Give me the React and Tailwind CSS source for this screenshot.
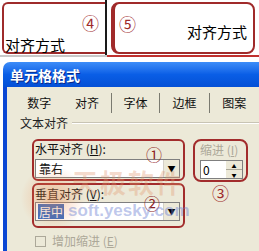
import React from "react";

const F = { fontFamily: '"Noto Sans CJK SC", "Noto Sans", sans-serif' };

function Tab({ label, w, sep }) {
  return (
    <div
      className={`h-[20px] flex items-center justify-center text-[12px] text-[#111] ${w} ${sep ? "border-r border-[#7a7a70]" : ""}`}
    >
      {label}
    </div>
  );
}

function Combo({ text, highlight }) {
  return (
    <div className="h-[19px] ml-[1px] mr-[3px] border border-[#7f7f7f] bg-white flex items-center">
      <div className="flex-1 flex items-center pl-[2px]">
        <span
          className={`text-[12px] leading-[15px] px-[1px] ${highlight ? "bg-[#316ac5] text-white" : "text-[#111]"}`}
        >
          {text}
        </span>
      </div>
      <div className="w-[16px] h-[17px] flex items-center justify-center bg-[#ece9d8] border-l border-[#d4d0c8] text-[8px] text-black">
        ▼
      </div>
    </div>
  );
}

export default function App() {
  return (
    <div className="w-[259px] h-[251px] overflow-hidden relative bg-white" style={F}>
      {/* spreadsheet cells */}
      <div className="flex h-[55px]">
        <div className="ml-[2px] mt-[2px] w-[103px] h-[52px] rounded-l-[6px] border-2 border-r-0 border-[#9e2b2b] flex flex-col pl-[1px]">
          <div className="flex justify-end pr-[6px] pt-[10px] h-[33px]">
            <span className="text-[17px] leading-[18px] text-[#9e2b2b]">④</span>
          </div>
          <span className="text-[15px] leading-[15px] text-black">对齐方式</span>
        </div>
        <div className="w-[2px] h-[57px] bg-[#1a1a1a]" />
        <div className="ml-[4px] mt-[2px] w-[144px] h-[52px] rounded-[8px] border-2 border-l-[4px] border-[#a02a2a] flex items-start justify-between pl-[4px] pr-[6px]">
          <span className="text-[17px] leading-[18px] text-[#9e2b2b] mt-[11px]">⑤</span>
          <span className="text-[15px] leading-[15px] text-black mt-[20px]">对齐方式</span>
        </div>
      </div>
      <div className="flex h-[2px]">
        <div className="w-[107px] bg-[#c8c8c8]" />
        <div className="flex-1 bg-[#c0302e]" />
      </div>
      <div className="h-[5px] bg-white" />

      {/* dialog */}
      <div className="ml-[3px] rounded-tl-[7px] overflow-hidden">
        <div className="h-[25px] bg-linear-to-b from-[#3d8df8] via-[#0a5ee6] to-[#0550d6] flex items-center pl-[7px]">
          <span className="text-white font-bold text-[14px] leading-[16px] [text-shadow:1px_1px_0_#0a2a8a]">
            单元格格式
          </span>
        </div>
        <div className="border-l-[4px] border-[#0b47d4] bg-[#ece9d8] h-[164px] pt-[6px]">
          {/* tabs */}
          <div className="flex pl-[8px] h-[20px]">
            <Tab label="数字" w="w-[53px]" />
            <Tab label="对齐" w="w-[53px]" sep />
            <Tab label="字体" w="w-[53px]" sep />
            <Tab label="边框" w="w-[54px]" sep />
            <Tab label="图案" w="w-[54px]" />
          </div>
          {/* group title */}
          <div className="flex items-center pl-[13px] mt-[2px] h-[15px]">
            <span className="text-[12px] leading-[14px] text-[#222]">文本对齐</span>
            <div className="flex-1 ml-[4px] h-[2px] border-t border-[#c8c4b4] border-b border-b-white" />
          </div>

          <div className="flex pl-[25px] mt-[9px] gap-[8px]">
            <div className="w-[153px] flex flex-col gap-[2px]">
              <div className="h-[42px] rounded-[6px] border-2 border-[#a22c2c] relative">
                <div className="text-[12px] leading-[15px] text-[#111] pl-[1px]">
                  水平对齐 (<span className="underline">H</span>):
                </div>
                <div className="mt-[3px]">
                  <Combo text="靠右" />
                </div>
                <span className="absolute left-[112px] top-[5px] text-[16px] leading-[16px] text-[#8e2222]">①</span>
              </div>
              <div className="h-[45px] rounded-[6px] border-2 border-[#a22c2c] relative">
                <div className="text-[12px] leading-[15px] text-[#111] pl-[1px] pt-[1px]">
                  垂直对齐 (<span className="underline">V</span>):
                </div>
                <div className="mt-[1px]">
                  <Combo text="居中" highlight />
                </div>
                <span className="absolute left-[110px] top-[10px] text-[16px] leading-[16px] text-[#8e2222]">②</span>
              </div>
            </div>
            <div className="flex flex-col items-center w-[55px]">
              <div className="w-[55px] h-[43px] rounded-[8px] border-2 border-[#a22c2c] pl-[5px] pt-[1px]">
                <div className="text-[12px] leading-[15px] text-[#aca899]">
                  缩进 (<span className="underline">I</span>)
                </div>
                <div className="mt-[3px] w-[43px] h-[19px] border border-[#7f7f7f] bg-white flex items-center">
                  <span className="flex-1 text-[12px] leading-[14px] pl-[2px] text-black">0</span>
                  <div className="w-[16px] h-[17px] flex flex-col bg-[#ece9d8]">
                    <div className="flex-1 flex items-center justify-center text-[5px] leading-[5px] border-b border-[#aca899]">▲</div>
                    <div className="flex-1 flex items-center justify-center text-[5px] leading-[5px]">▼</div>
                  </div>
                </div>
              </div>
              <span className="mt-[2px] text-[17px] leading-[18px] text-[#9e2b2b]">③</span>
            </div>
          </div>

          <div className="flex items-center pl-[28px] mt-[6px] gap-[6px]">
            <div className="w-[11px] h-[11px] border border-[#aca899] bg-[#ece9d8]" />
            <span className="text-[12px] leading-[14px] text-[#aca899]">
              增加缩进 (<span className="underline">E</span>)
            </span>
          </div>
        </div>
      </div>

      {/* watermark */}
      <div className="absolute left-[18px] top-[168px] w-[70px] h-[60px] rounded-full bg-[radial-gradient(circle,rgba(240,140,80,0.45),rgba(240,140,80,0)_70%)] pointer-events-none" />
      <div className="absolute left-[72px] top-[167px] text-[26px] leading-[30px] font-bold text-[rgba(225,150,110,0.35)] tracking-[2px] pointer-events-none">
        天极软件
      </div>
      <div className="absolute left-[68px] top-[201px] text-[17px] leading-[20px] font-bold text-[rgba(110,130,210,0.45)] pointer-events-none" style={{ fontFamily: '"Liberation Sans", sans-serif' }}>
        soft.yesky.com
      </div>
    </div>
  );
}
